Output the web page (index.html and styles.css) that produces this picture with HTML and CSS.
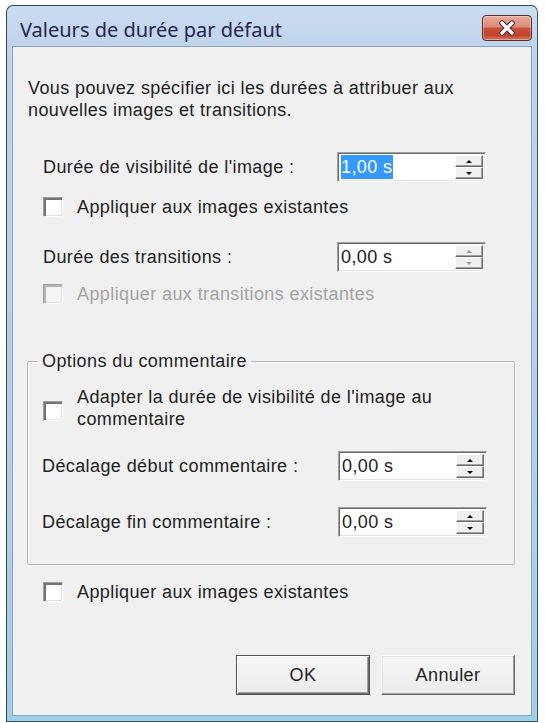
FILE: index.html
```html
<!DOCTYPE html>
<html lang="fr">
<head>
<meta charset="utf-8">
<title>Valeurs de durée par défaut</title>
<link rel="stylesheet" href="styles.css">
</head>
<body>
<div class="window">
  <div class="titlebar">
    <span class="title">Valeurs de durée par défaut</span>
    <div class="close">
      <svg width="22" height="16" viewBox="0 0 22 16">
        <path d="M6 3 L16 13 M16 3 L6 13" stroke="#5a3434" stroke-width="5.5" stroke-linecap="round" fill="none"/>
        <path d="M6 3 L16 13 M16 3 L6 13" stroke="#ffffff" stroke-width="3.2" stroke-linecap="round" fill="none"/>
      </svg>
    </div>
  </div>
  <div class="client">
    <p class="intro">Vous pouvez spécifier ici les durées à attribuer aux<br>nouvelles images et transitions.</p>

    <div class="row row-first">
      <span class="label">Durée de visibilité de l'image :</span>
      <div class="spin">
        <div class="val"><span class="sel">1,00 s</span></div>
        <div class="arrows">
          <div class="arr"><span class="tri up"></span></div>
          <div class="arr"><span class="tri down"></span></div>
        </div>
      </div>
    </div>
    <div class="check check-1"><span class="box"></span><span>Appliquer aux images existantes</span></div>

    <div class="row row-second">
      <span class="label">Durée des transitions :</span>
      <div class="spin">
        <div class="val">0,00 s</div>
        <div class="arrows disabled">
          <div class="arr"><span class="tri up"></span></div>
          <div class="arr"><span class="tri down"></span></div>
        </div>
      </div>
    </div>
    <div class="check check-2 disabled"><span class="box"></span><span>Appliquer aux transitions existantes</span></div>

    <fieldset class="group">
      <legend>Options du commentaire</legend>
      <div class="check check-multi"><span class="box"></span><span>Adapter la durée de visibilité de l'image au<br>commentaire</span></div>
      <div class="row row-start">
        <span class="label">Décalage début commentaire :</span>
        <div class="spin">
          <div class="val">0,00 s</div>
          <div class="arrows">
            <div class="arr"><span class="tri up"></span></div>
            <div class="arr"><span class="tri down"></span></div>
          </div>
        </div>
      </div>
      <div class="row row-end">
        <span class="label">Décalage fin commentaire :</span>
        <div class="spin">
          <div class="val">0,00 s</div>
          <div class="arrows">
            <div class="arr"><span class="tri up"></span></div>
            <div class="arr"><span class="tri down"></span></div>
          </div>
        </div>
      </div>
    </fieldset>

    <div class="check check-3"><span class="box"></span><span>Appliquer aux images existantes</span></div>

    <div class="buttons">
      <button class="btn ok">OK</button>
      <button class="btn">Annuler</button>
    </div>
  </div>
</div>
</body>
</html>
```

FILE: styles.css
```css
html, body {
  margin: 0;
  background: #ffffff;
}

.window {
  box-sizing: border-box;
  width: 532px;
  height: 717px;
  margin: 5px 0 0 6px;
  border: 1px solid #34445a;
  border-bottom-color: #2f5f78;
  border-right-color: #3c5a72;
  border-radius: 7px 7px 0 0;
  background: linear-gradient(to bottom, #cadcf0 0, #bfd4ec 40px, #b6cfea 50%, #9fcfe4 100%);
  padding: 0 5px 5px;
  display: flex;
  flex-direction: column;
}

.titlebar {
  height: 40px;
  flex: none;
  display: flex;
  justify-content: space-between;
  align-items: flex-start;
  padding-left: 8px;
}

.title {
  font-family: "Noto Sans", "Open Sans", sans-serif;
  font-size: 20px;
  line-height: 26px;
  margin-top: 11px;
  color: #28244c;
}

.close {
  box-sizing: border-box;
  width: 50px;
  height: 26px;
  margin-top: 9px;
  border: 1px solid #5a2c28;
  border-radius: 4px;
  background: linear-gradient(to bottom, #e9ab9c 0%, #dc8b78 45%, #c9503a 52%, #c0432c 80%, #d77a60 100%);
  box-shadow: inset 0 0 0 1px rgba(255, 255, 255, 0.35);
  display: flex;
  align-items: center;
  justify-content: center;
}

.client {
  flex: 1;
  background: #f0f0f0;
  border: 1px solid #8aa3be;
  font-family: "Liberation Sans", Arial, sans-serif;
  font-size: 18px;
  letter-spacing: 0.4px;
  color: #222222;
  display: flex;
  flex-direction: column;
}

.intro {
  margin: 0;
  padding: 30px 0 0 15px;
  line-height: 22px;
}

.row {
  display: flex;
  align-items: center;
  justify-content: space-between;
  padding: 0 45px 0 30px;
}

.row-first { margin-top: 31px; }
.row-second { margin-top: 24px; }

.label {
  line-height: 22px;
}

.spin {
  box-sizing: border-box;
  width: 149px;
  height: 30px;
  display: flex;
  background: #ffffff;
  border: 1px solid;
  border-color: #a0a0a0 #ffffff #ffffff #a0a0a0;
  box-shadow: inset 1px 1px 0 #6d6d6d, inset -1px -1px 0 #e3e3e3;
}

.val {
  flex: 1;
  padding: 2px 0 0 3px;
  line-height: 24px;
}

.sel {
  background: #3399ff;
  color: #ffffff;
  display: inline-block;
  padding-right: 1px;
}

.arrows {
  width: 28px;
  display: flex;
  flex-direction: column;
  padding: 2px 2px 2px 0;
}

.arr {
  flex: 1;
  box-sizing: border-box;
  background: #f0f0f0;
  border: 1px solid;
  border-color: #ffffff #696969 #696969 #ffffff;
  box-shadow: inset -1px -1px 0 #a0a0a0;
  display: flex;
  align-items: center;
  justify-content: center;
}

.tri {
  width: 0;
  height: 0;
  border-left: 3px solid transparent;
  border-right: 3px solid transparent;
}

.tri.up { border-bottom: 3px solid #000000; }
.tri.down { border-top: 3px solid #000000; }
.arrows.disabled .tri.up { border-bottom-color: #a0a0a0; }
.arrows.disabled .tri.down { border-top-color: #a0a0a0; }

.check {
  display: flex;
  align-items: center;
  gap: 14px;
  padding-left: 30px;
  line-height: 22px;
}

.check-1 { margin-top: 14px; }
.check-2 { margin-top: 11px; }
.check-3 { margin-top: 16px; }

.box {
  box-sizing: border-box;
  width: 20px;
  height: 20px;
  flex: none;
  background: #ffffff;
  border: 1px solid;
  border-color: #a0a0a0 #ffffff #ffffff #a0a0a0;
  box-shadow: inset 2px 2px 0 #737373, inset -1px -1px 0 #e3e3e3;
}

.check.disabled {
  color: #a3a3a3;
}

.check.disabled .box {
  background: #f4f4f4;
  box-shadow: inset 2px 2px 0 #b4b4b4, inset -1px -1px 0 #e3e3e3;
}

.group {
  margin: 45px 16px 0 14px;
  padding: 0 27px 27px 14px;
  border: 1px solid #b4b4b4;
  border-radius: 2px;
  box-shadow: inset 1px 1px 0 #ffffff, 1px 1px 0 #ffffff;
  min-width: 0;
}

.group legend {
  padding: 0 4px;
  margin-left: -4px;
  line-height: 22px;
}

.check-multi {
  margin-top: 14px;
  padding-left: 1px;
}

.check-multi .box {
  margin-top: 6px;
}

.row-start {
  margin-top: 21px;
  padding: 0;
}

.row-end {
  margin-top: 26px;
  padding: 0;
}

.buttons {
  margin-top: 52px;
  display: flex;
  justify-content: flex-end;
  gap: 11px;
  padding-right: 16px;
}

.btn {
  box-sizing: border-box;
  width: 134px;
  height: 40px;
  font-family: "Liberation Sans", Arial, sans-serif;
  font-size: 18px;
  letter-spacing: 0.4px;
  color: #222222;
  background: linear-gradient(to bottom, #f6f6f6, #ececec);
  border: 1px solid;
  border-color: #ffffff #696969 #696969 #ffffff;
  box-shadow: inset -1px -1px 0 #a0a0a0, inset 1px 1px 0 #e3e3e3;
  padding: 0;
}

.btn.ok {
  border: 1px solid #555555;
  box-shadow: inset 1px 1px 0 #ffffff, inset -1px -1px 0 #696969, inset -2px -2px 0 #a0a0a0;
}
```
